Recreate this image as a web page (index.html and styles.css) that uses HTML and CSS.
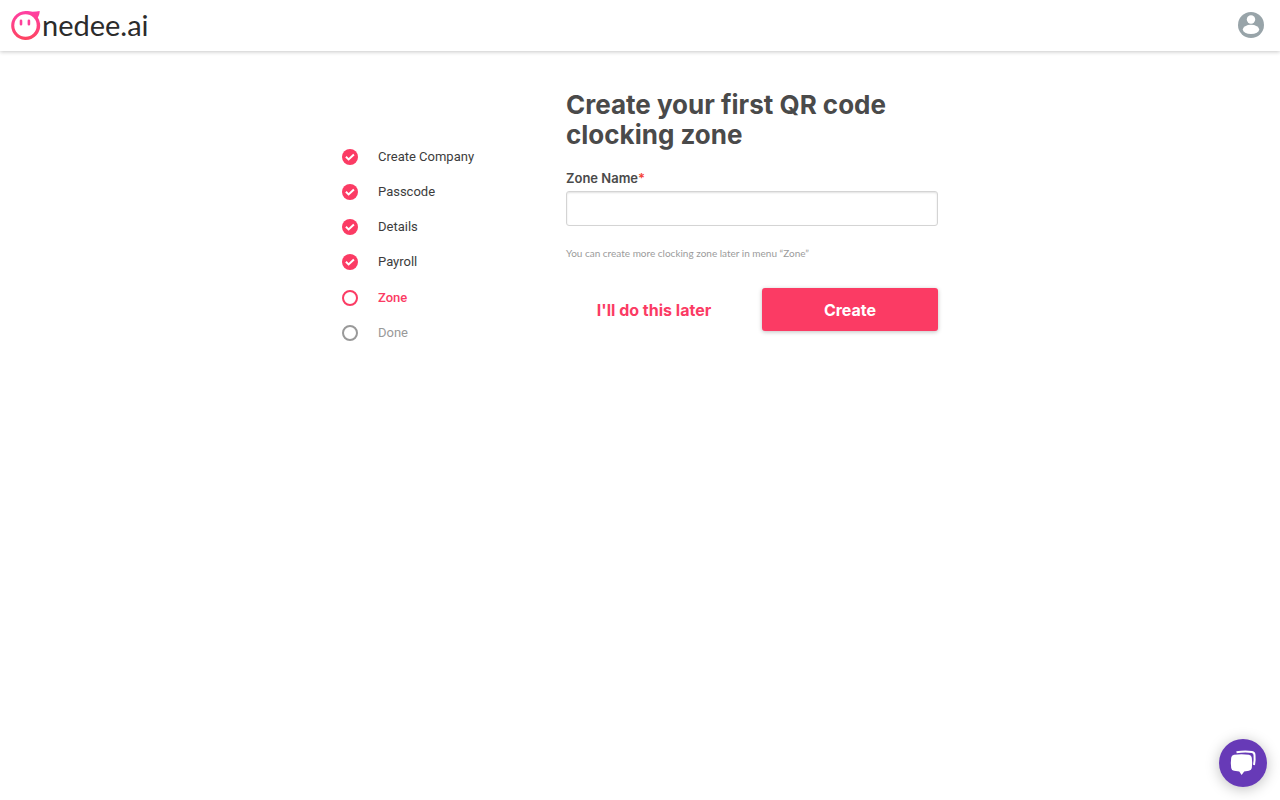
FILE: index.html
```html
<!DOCTYPE html>
<html lang="en">
<head>
<meta charset="utf-8">
<meta name="viewport" content="width=device-width, initial-scale=1">
<title>Onedee.ai</title>
<link rel="stylesheet" href="styles.css">
</head>
<body>
<header class="topbar">
  <a class="logo" href="#" aria-label="Onedee.ai">
    <svg class="logo-mark" viewBox="0 0 30 30" aria-hidden="true">
      <defs><linearGradient id="pink" x1="0" y1="0" x2="0" y2="1"><stop offset="0" stop-color="#ff3fa4"/><stop offset="1" stop-color="#fe4460"/></linearGradient></defs>
      <path fill="url(#pink)" d="M14.500 1C18 1 19.500 1.700 21.500 1.700C24 1.700 26.500 1.200 28.700 1C28.700 3.500 28 5.500 26.800 7.500A14.500 14.500 0 1 1 14.500 1Z"/>
      <circle cx="14.500" cy="15.500" r="11.200" fill="#fff"/>
      <path d="M10 10.800v3.400M17.900 10.800v3.400" stroke="#fe409a" stroke-width="2.600" stroke-linecap="round"/>
    </svg>
    <span class="logo-text">nedee.ai</span>
  </a>
  <button class="account" type="button" aria-label="Account">
    <svg viewBox="0 0 26 26" aria-hidden="true"><circle cx="13" cy="13" r="13" fill="#98a4a9"/><circle cx="13" cy="7.500" r="4.200" fill="#fff"/><ellipse cx="13" cy="17.400" rx="8.200" ry="4.600" fill="#fff"/></svg>
  </button>
</header>
<main class="setup">
  <ol class="steps">
    <li class="step"><svg class="step-icon" viewBox="0 0 16 16" aria-hidden="true"><circle cx="8" cy="8" r="8" fill="#fb3b64"/><path class="tick" d="M3.900 7.800l2.700 2.600 5.300-5"/></svg>Create Company</li>
    <li class="step"><svg class="step-icon" viewBox="0 0 16 16" aria-hidden="true"><circle cx="8" cy="8" r="8" fill="#fb3b64"/><path class="tick" d="M3.900 7.800l2.700 2.600 5.300-5"/></svg>Passcode</li>
    <li class="step"><svg class="step-icon" viewBox="0 0 16 16" aria-hidden="true"><circle cx="8" cy="8" r="8" fill="#fb3b64"/><path class="tick" d="M3.900 7.800l2.700 2.600 5.300-5"/></svg>Details</li>
    <li class="step"><svg class="step-icon" viewBox="0 0 16 16" aria-hidden="true"><circle cx="8" cy="8" r="8" fill="#fb3b64"/><path class="tick" d="M3.900 7.800l2.700 2.600 5.300-5"/></svg>Payroll</li>
    <li class="step current" aria-current="step"><svg class="step-icon" viewBox="0 0 16 16" aria-hidden="true"><circle class="ring" cx="8" cy="8" r="7"/></svg>Zone</li>
    <li class="step pending"><svg class="step-icon" viewBox="0 0 16 16" aria-hidden="true"><circle class="ring" cx="8" cy="8" r="7"/></svg>Done</li>
  </ol>
  <form class="zone-form">
    <h1 class="title">Create your first QR code clocking zone</h1>
    <label class="label" for="zone-name">Zone Name<span class="required">*</span></label>
    <input class="field" id="zone-name" type="text" required>
    <p class="hint">You can create more clocking zone later in menu “Zone”</p>
    <div class="actions">
      <button class="btn" type="button">I'll do this later</button>
      <button class="btn primary" type="submit">Create</button>
    </div>
  </form>
</main>
<button class="chat" type="button" aria-label="Open chat">
  <svg viewBox="0 0 48 48" aria-hidden="true">
    <path d="M17.500 13.300Q25.500 12 33 13Q35.500 13.500 35.500 16Q36 21 35 26" fill="none" stroke="#fff" stroke-width="2"/>
    <path fill="#fff" d="M15 15.800Q22.500 14.800 30 15.800Q32.500 16.200 32.800 18.700Q33.600 24 32.800 29Q32.500 31.300 30 31.800L25.200 32.400 22.600 36 20.300 32.400 15 31.800Q12.600 31.400 12.200 29Q11.400 24 12.200 18.700Q12.500 16.200 15 15.800Z"/>
  </svg>
</button>
</body>
</html>
```

FILE: styles.css
```css
* { box-sizing: border-box; }
body {
  margin: 0;
  background: #fff;
  color: #4a4a4a;
  font-family: Inter, "Open Sans", sans-serif;
}
button { border: 0; background: none; padding: 0; font: inherit; cursor: pointer; }
svg { display: block; }
.topbar {
  display: flex;
  align-items: center;
  justify-content: space-between;
  height: 51px;
  padding: 0 16px 1px 11px;
  box-shadow: 0 1px 4px rgba(0, 0, 0, .22);
}
.logo { display: flex; align-items: center; gap: 1px; color: #2b2b2b; text-decoration: none; }
.logo-mark { width: 30px; height: 30px; }
.logo-text { font-family: Lato, sans-serif; font-size: 29px; line-height: 30px; }
.account { width: 26px; height: 26px; }
.setup {
  display: grid;
  grid-template-columns: 224fr 372fr;
  max-width: 596px;
  margin: 0 auto;
  padding-top: 39px;
}
.steps { list-style: none; margin: 0; padding: 49px 0 0; }
.step {
  display: flex;
  align-items: center;
  gap: 20px;
  height: 35px;
  color: #3c3c3c;
  font-family: Roboto, sans-serif;
  font-size: 13px;
}
.step-icon { width: 16px; height: 16px; }
.tick { fill: none; stroke: #fff; stroke-width: 2; }
.ring { fill: none; stroke: currentColor; stroke-width: 2; }
.current { margin-top: 1px; color: #fb3b64; font-weight: 500; }
.pending { color: #999; }
.title { margin: 0 0 20px; font-size: 26px; font-weight: 700; line-height: 30px; }
.label { display: block; margin-bottom: 4px; font-size: 13px; font-weight: 600; line-height: 17px; }
.required { color: #f44336; }
.field {
  display: block;
  width: 100%;
  height: 35px;
  padding: 6px 12px;
  border: 1px solid #d4d4d4;
  border-radius: 3px;
  box-shadow: inset 0 1px 2px rgba(0, 0, 0, .12);
  font: inherit;
}
.hint { margin: 20px 0 28px; color: #9b9b9b; font-family: Lato, sans-serif; font-size: 10px; line-height: 14px; }
.actions { display: grid; grid-template-columns: 1fr 1fr; gap: 20px; }
.btn { height: 43px; border-radius: 3px; color: #fb3b64; font-size: 16px; font-weight: 700; }
.primary { background: #fb3b64; color: #fff; box-shadow: 0 1px 4px rgba(0, 0, 0, .25); }
.chat {
  position: fixed;
  right: 13px;
  bottom: 13px;
  width: 48px;
  height: 48px;
  border-radius: 50%;
  background: #673ab7;
  box-shadow: 0 2px 14px rgba(0, 0, 0, .25);
}
```
